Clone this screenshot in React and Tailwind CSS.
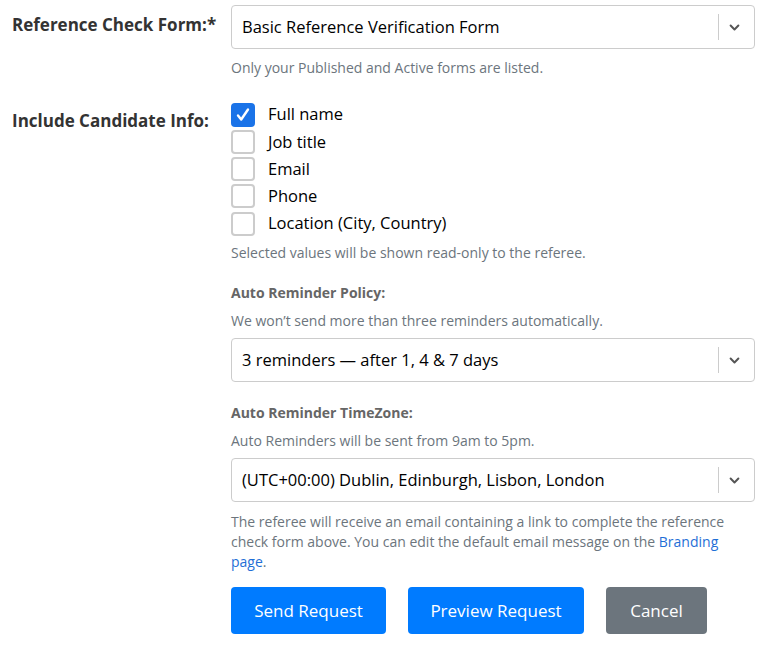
import React, { useState } from 'react';

const font = { fontFamily: '"Segoe UI", "Open Sans", "Noto Sans", sans-serif' };

function Chevron() {
  return (
    <svg width="13" height="13" viewBox="0 0 20 20" className="text-[#555]">
      <path d="M4 7l6 6 6-6" fill="none" stroke="currentColor" strokeWidth="3" strokeLinecap="round" strokeLinejoin="round" />
    </svg>
  );
}

function SelectBox({ value }) {
  return (
    <div className="flex h-[44px] items-center rounded border border-[#ccc] bg-white">
      <div className="flex-1 truncate pl-[10px] text-[16.5px] text-black">{value}</div>
      <div className="h-[26px] w-px bg-[#ccc]" />
      <div className="flex w-[35px] items-center justify-center pr-[4px]">
        <Chevron />
      </div>
    </div>
  );
}

function Check({ label, checked, onToggle }) {
  return (
    <label className="flex h-[27.25px] cursor-pointer items-center">
      <span
        onClick={onToggle}
        className={
          checked
            ? 'flex h-[24px] w-[24px] items-center justify-center rounded-[4px] bg-[#1a73e8]'
            : 'h-[24px] w-[24px] rounded-[4px] border-2 border-[#ccc] bg-white'
        }
      >
        {checked && (
          <svg width="16" height="16" viewBox="0 0 16 16">
            <path d="M3 8.5l3.2 4L13 2.5" fill="none" stroke="white" strokeWidth="2.4" strokeLinecap="round" strokeLinejoin="round" />
          </svg>
        )}
      </span>
      <span className="ml-[13px] text-[16.5px] text-black">{label}</span>
    </label>
  );
}

export default function App() {
  const [checks, setChecks] = useState({
    'Full name': true,
    'Job title': false,
    Email: false,
    Phone: false,
    'Location (City, Country)': false,
  });

  return (
    <div style={font} className="min-h-screen bg-white pl-3 pr-4 pt-[5px]">
      <div className="grid grid-cols-[219px_1fr]">
        <div className="pt-[7px] text-[17px] font-bold text-[#333]">Reference Check Form:*</div>
        <div>
          <SelectBox value="Basic Reference Verification Form" />
          <p className="mt-[9px] text-[14px] leading-5 text-[#6c757d]">Only your Published and Active forms are listed.</p>
        </div>

        <div className="pt-[30px] text-[17px] font-bold text-[#333]">Include Candidate Info:</div>
        <div className="pt-[23px]">
          {Object.keys(checks).map((k) => (
            <Check
              key={k}
              label={k}
              checked={checks[k]}
              onToggle={() => setChecks({ ...checks, [k]: !checks[k] })}
            />
          ))}
          <p className="mt-[6px] text-[14px] leading-5 text-[#6c757d]">Selected values will be shown read-only to the referee.</p>

          <h4 className="mt-[20px] text-[14px] font-bold leading-5 text-[#666]">Auto Reminder Policy:</h4>
          <p className="mt-[8px] text-[14px] leading-5 text-[#6c757d]">We won’t send more than three reminders automatically.</p>
          <div className="mt-[7px]">
            <SelectBox value="3 reminders — after 1, 4 & 7 days" />
          </div>

          <h4 className="mt-[21px] text-[14px] font-bold leading-5 text-[#666]">Auto Reminder TimeZone:</h4>
          <p className="mt-[8px] text-[14px] leading-5 text-[#6c757d]">Auto Reminders will be sent from 9am to 5pm.</p>
          <div className="mt-[7px]">
            <SelectBox value="(UTC+00:00) Dublin, Edinburgh, Lisbon, London" />
          </div>

          <p className="mt-[10px] text-[14px] leading-5 text-[#6c757d]">
            The referee will receive an email containing a link to complete the reference check form above. You can edit the default email message on the{' '}
            <a href="#" className="text-[#1f6fd6]">Branding page</a>.
          </p>

          <div className="mt-[15px] flex gap-[22px]">
            <button className="h-[47px] w-[155px] rounded-[4px] bg-[#007bff] text-[17px] text-white">Send Request</button>
            <button className="h-[47px] w-[176px] rounded-[4px] bg-[#007bff] text-[17px] text-white">Preview Request</button>
            <button className="h-[47px] w-[101px] rounded-[4px] bg-[#6c757d] text-[17px] text-white">Cancel</button>
          </div>
        </div>
      </div>
    </div>
  );
}
